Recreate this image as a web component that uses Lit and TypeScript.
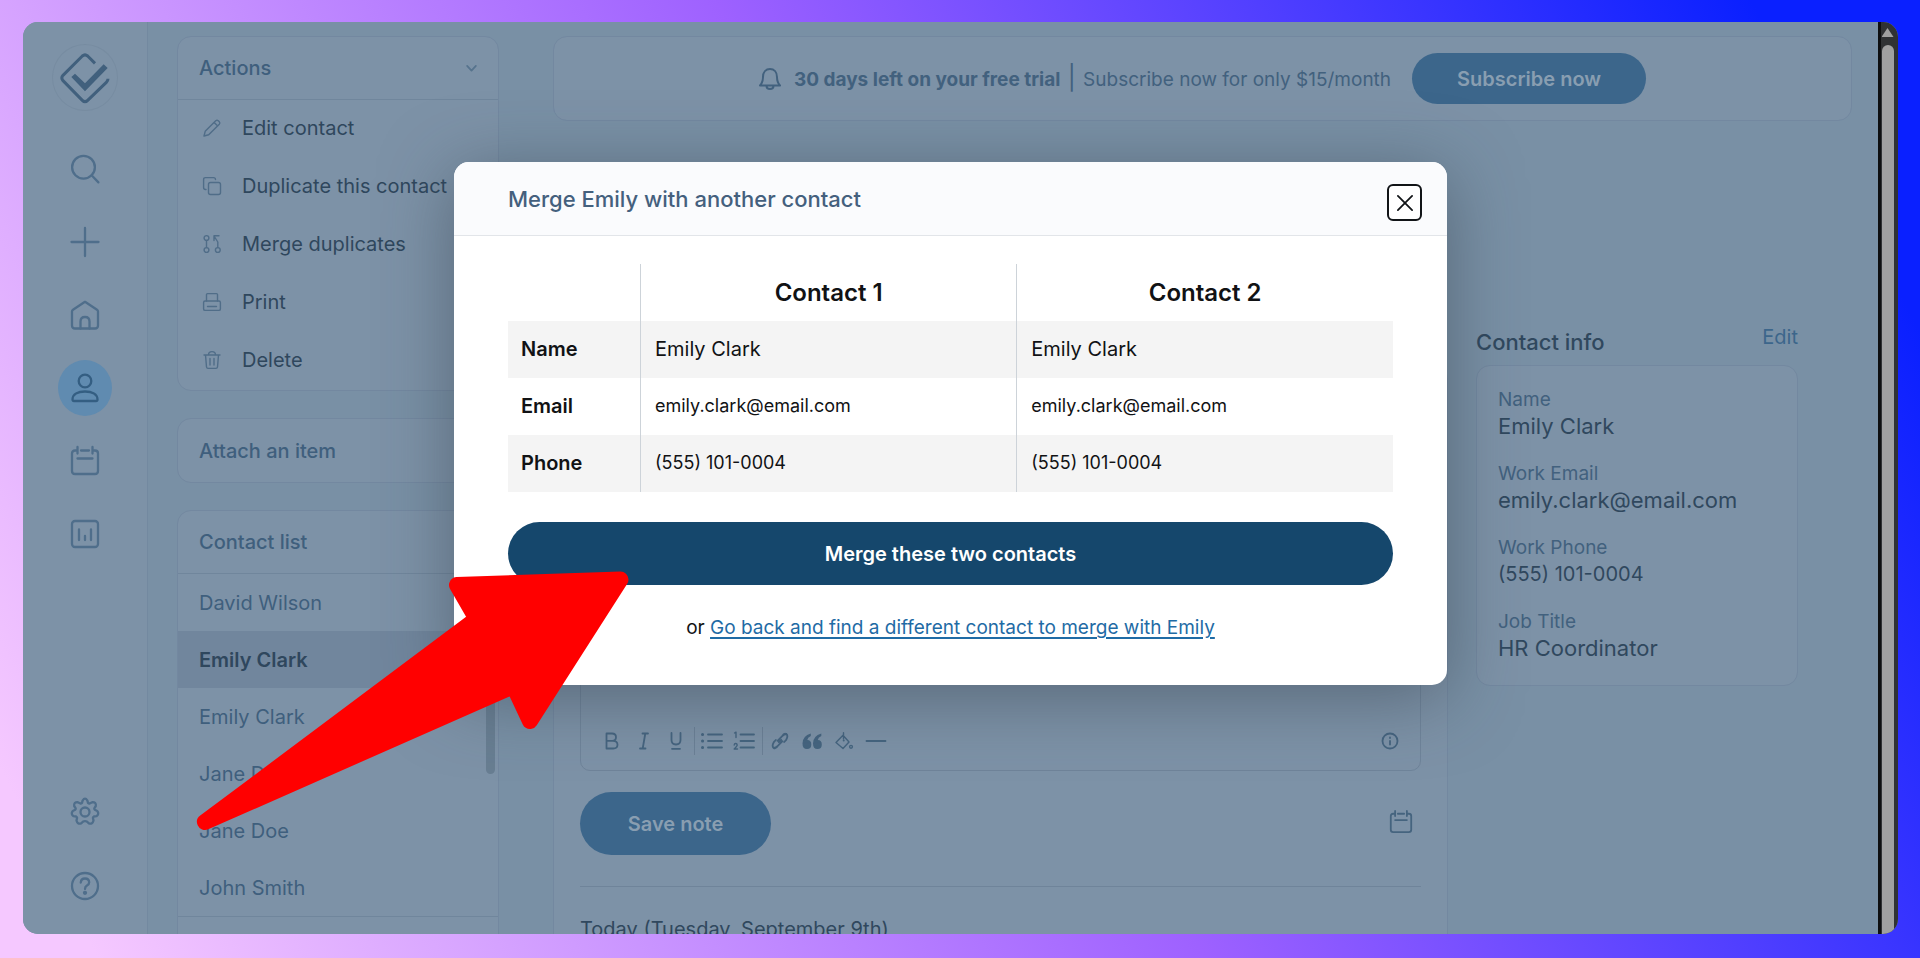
import { LitElement, html, css, svg, nothing } from "lit";
import { customElement, property, state } from "lit/decorators.js";
import { classMap } from "lit/directives/class-map.js";

const icons: Record<string, { box: string; art: unknown }> = {
  search: {
    box: "0 0 28 28",
    art: svg`<circle cx="12.5" cy="12.2" r="11.4"/><path d="M20.6 20.3 27.4 27.4"/>`,
  },
  plus: { box: "0 0 28 28", art: svg`<path d="M14 0V28M0.5 14H27.5"/>` },
  home: {
    box: "0 0 28 28",
    art: svg`<path d="M1 10.5V24.5Q1 27.5 4 27.5H24Q27 27.5 27 24.5V10.5Q27 9.500 26 8.800L14 0.800L2 8.800Q1 9.500 1 10.500Z"/><path d="M9.500 27.500V20.500Q9.500 16 14 16T18.500 20.500V27.500"/>`,
  },
  user: {
    box: "0 0 28 28",
    art: svg`<circle cx="14" cy="7" r="6.3"/><path d="M1.500 25.500C1.500 20 7 17.500 14 17.500S26.500 20 26.500 25.500Q26.500 27 25 27H3Q1.500 27 1.500 25.500Z"/>`,
  },
  calendar: {
    box: "0 0 28 28",
    art: svg`<path d="M6.500 3.500H4Q1 3.500 1 6.500V24Q1 27 4 27H24Q27 27 27 24V6.500Q27 3.500 24 3.500H21.500M10 3.500H18M6.500 0V6.500M21.500 0V6.500M6.500 11.500H21.500"/>`,
  },
  report: {
    box: "0 0 28 28",
    art: svg`<rect x="1" y="1" width="26" height="26" rx="3"/><path d="M8 9.500V20M14 16V20M20 9.500V20"/>`,
  },
  gear: {
    box: "0 0 28 28",
    art: svg`<circle cx="14" cy="14" r="4.500"/><path d="M11.6 2.600Q14-1.200 16.400 2.600L17 5Q17.600 5.600 18.600 5.500L21.200 4.200Q25.400 4 24.800 8L23.300 10.300Q23.200 11.200 23.800 11.800L26.200 13Q28.600 16 25.400 18.200L22.900 18.500Q22 19 21.900 19.800L22.500 22.600Q21.600 26.400 17.900 25.300L15.900 23.600Q14 22.600 12.100 23.600L10.100 25.300Q6.400 26.400 5.500 22.600L6.100 19.800Q6 19 5.100 18.500L2.600 18.200Q-0.600 16 1.800 13L4.200 11.800Q4.800 11.200 4.700 10.300L3.200 8Q2.600 4 6.800 4.200L9.400 5.500Q10.400 5.600 11 5Z"/>`,
  },
  help: {
    box: "0 0 28 28",
    art: svg`<circle cx="14" cy="14" r="13"/><path d="M9.800 10.500Q10 6.500 14 6.500T18.200 10.300Q18.200 12.300 16 13.600Q14 14.800 14 17"/><circle cx="14" cy="20.800" r="1" fill="currentColor"/>`,
  },
  pencil: {
    box: "0 0 18 18",
    art: svg`<path d="M1 17 2.200 12.300 12.700 1.800Q14 0.600 15.300 1.800L16.300 2.800Q17.400 4 16.300 5.200L5.700 15.800ZM11.200 3.400 14.700 6.900"/>`,
  },
  copy: {
    box: "0 0 18 18",
    art: svg`<rect x="5.500" y="5.500" width="12" height="12" rx="2"/><path d="M3 12.500H2.500Q.6 12.500.6 10.500V2.500Q.6.600 2.500.600H10.500Q12.500.600 12.500 2.500"/>`,
  },
  merge: {
    box: "0 0 18 18",
    art: svg`<circle cx="3.500" cy="3" r="2.400"/><circle cx="3.500" cy="15" r="2.400"/><circle cx="14.800" cy="15" r="2.400"/><path d="M3.500 5.400V12.600M14.800 12.600V7L11 1M11 5.500V.800H16"/>`,
  },
  print: {
    box: "0 0 18 18",
    art: svg`<path d="M3.500 8V1.500Q3.500.600 4.500.600H13.500Q14.500.600 14.500 1.500V8"/><rect x=".6" y="8" width="16.800" height="9.400" rx="1.500"/><path d="M4.500 13.500H13.500"/>`,
  },
  trash: {
    box: "0 0 18 18",
    art: svg`<path d="M1 4H17M5.500 4Q5.500.600 9 .600T12.500 4M2.500 4 3.500 16Q3.700 17.400 5 17.400H13Q14.300 17.400 14.500 16L15.500 4M7 7.500V14M11 7.500V14"/>`,
  },
  chevron: { box: "0 0 12 8", art: svg`<path d="M1 1 6 6.500 11 1"/>` },
  bell: {
    box: "0 0 22 22",
    art: svg`<path d="M1 17.500C3.500 15 4 12.500 4 9C4 4 7 1 11 1S18 4 18 9C18 12.500 18.500 15 21 17.500ZM7.500 18C7.500 22 14.500 22 14.500 18"/>`,
  },
  close: { box: "0 0 18 18", art: svg`<path d="M1 1 17 17M17 1 1 17"/>` },
  bold: {
    box: "0 0 18 18",
    art: svg`<path d="M3.500 1.500H9Q13 1.500 13 5.200T9 8.800H3.500ZM3.500 8.800H10Q14.500 8.800 14.500 12.700T10 16.500H3.500Z"/>`,
  },
  italic: { box: "0 0 18 18", art: svg`<path d="M7.500 1.500H13M5 16.500H10.500M10.300 1.500 7.700 16.500"/>` },
  underline: {
    box: "0 0 18 18",
    art: svg`<path d="M4.500 1V8Q4.500 12.500 9 12.500T13.500 8V1M5 16.800H13"/>`,
  },
  bullets: {
    box: "0 0 20 18",
    art: svg`<path d="M6 2.500H20M6 9H20M6 15.500H20"/><path d="M.5 2.500H.6M.5 9H.6M.5 15.500H.6" stroke-width="3"/>`,
  },
  numbers: {
    box: "0 0 20 18",
    art: svg`<path d="M6.500 2.500H20M6.500 9H20M6.500 15.500H20"/><path stroke-width="1.400" d="M.500 1 2 .200V5.500M.200 13Q.300 11.500 1.700 11.500T3.200 13Q3.200 14 .200 17H3.500"/>`,
  },
  link: {
    box: "0 0 18 18",
    art: svg`<path d="M6.500 8.800 11.200 4.100Q13 2.300 15.300 2Q17.500 3.800 15.200 7.800L13.200 10M11.500 9.200 6.800 13.900Q5 15.700 2.700 16Q.500 14.200 2.800 10.200L4.800 8M7.800 10.200 10.200 7.800M11.200 4.100Q13 .8 15.500 2.100M6.800 13.900Q5 17.200 2.500 15.900"/>`,
  },
  quote: {
    box: "0 0 20 18",
    art: svg`<path stroke="none" fill="currentColor" d="M8.800 1.500V4Q5.500 5.500 5.300 8Q9.300 8 9.300 12.500Q9.300 17 5 17Q.500 17 .500 11.500Q.500 4 8.800 1.500ZM19.300 1.500V4Q16 5.500 15.800 8Q19.800 8 19.800 12.500Q19.800 17 15.500 17Q11 17 11 11.500Q11 4 19.300 1.500Z"/>`,
  },
  fill: {
    box: "0 0 18 18",
    art: svg`<path stroke-width="1.400" d="M8 3.200 14 10 8 16.500 1 10.500ZM8.500 .800V7"/><circle cx="16" cy="14.800" r="1.400" stroke-width="1.400"/><circle cx="8.700" cy="8.500" r="1" fill="currentColor" stroke="none"/>`,
  },
  rule: { box: "0 0 20 18", art: svg`<path d="M.5 9H19.500"/>` },
  info: {
    box: "0 0 18 18",
    art: svg`<circle cx="9" cy="9" r="7.500"/><path d="M9 9V12.500M9 5.500V6"/>`,
  },
};

@customElement("line-icon")
export class LineIcon extends LitElement {
  @property() name = "";

  static styles = css`
    :host {
      display: inline-flex;
    }
    .art {
      width: 100%;
      height: 100%;
      overflow: visible;
      fill: none;
      stroke: currentColor;
      stroke-width: var(--line, 2.3);
      stroke-linecap: round;
      stroke-linejoin: round;
    }
  `;

  render() {
    const icon = icons[this.name];
    return icon
      ? html`<svg class="art" viewBox=${icon.box} aria-hidden="true">${icon.art}</svg>`
      : nothing;
  }
}

@customElement("nav-rail")
export class NavRail extends LitElement {
  static styles = css`
    :host {
      display: flex;
      flex-direction: column;
      align-items: center;
      width: 125px;
      flex: none;
      box-sizing: border-box;
      padding: 22px 0;
      border-right: 1px solid #7389a0;
      background: #7d92a7;
      color: #4f6e8b;
    }
    .brand {
      display: flex;
      align-items: center;
      justify-content: center;
      box-sizing: border-box;
      width: 66px;
      height: 67px;
      border: 1px solid #778ca1;
      border-radius: 50%;
      color: #41607d;
    }
    .mark {
      width: 50px;
      height: 52px;
    }
    .links {
      display: flex;
      flex-direction: column;
    }
    .main {
      margin-top: 30px;
      gap: 17px;
    }
    .foot {
      margin-top: auto;
      margin-bottom: -2px;
      gap: 18px;
    }
    .item {
      display: flex;
      align-items: center;
      justify-content: center;
      width: 54px;
      height: 56px;
      border-radius: 50%;
      color: inherit;
    }
    .item.on {
      background: #608bb0;
      color: #345e82;
    }
    .pic {
      width: 28px;
      height: 28px;
    }
  `;

  private item(name: string, label: string, on = false) {
    return html`<a href="#${name}" aria-label=${label} class=${classMap({ item: true, on })}
      ><line-icon class="pic" name=${name}></line-icon
    ></a>`;
  }

  render() {
    return html`
      <a class="brand" href="#start" aria-label="Start">
        <svg class="mark" viewBox="0 0 150 156" fill="none" stroke="currentColor">
          <path
            d="M105 34 83 12Q75 5 67 12L9 70Q2 78 9 86L67 145Q75 153 83 145L139 91Q144 86 144 80"
            stroke-width="9"
          />
          <path d="M34 75 45 65 75 94 131 37 143 48 75 118Z" fill="currentColor" stroke="none" />
        </svg>
      </a>
      <nav class="links main">
        ${this.item("search", "Search")} ${this.item("plus", "Add")} ${this.item("home", "Home")}
        ${this.item("user", "Contacts", true)} ${this.item("calendar", "Calendar")}
        ${this.item("report", "Reports")}
      </nav>
      <nav class="links foot">
        ${this.item("gear", "Settings")} ${this.item("help", "Help")}
      </nav>
    `;
  }
}

@customElement("side-panels")
export class SidePanels extends LitElement {
  @state() private selected = 1;

  private actions = [
    ["pencil", "Edit contact"],
    ["copy", "Duplicate this contact"],
    ["merge", "Merge duplicates"],
    ["print", "Print"],
    ["trash", "Delete"],
  ];
  private contacts = ["David Wilson", "Emily Clark", "Emily Clark", "Jane Doe", "Jane Doe", "John Smith"];

  static styles = css`
    :host {
      display: flex;
      flex-direction: column;
      gap: 27px;
      width: 322px;
      flex: none;
      color: #3f5f7d;
    }
    .card {
      box-sizing: border-box;
      border: 1px solid #7388a0;
      border-radius: 14px;
      background: #7d92a7;
      overflow: hidden;
      flex: none;
      position: relative;
    }
    .head {
      display: flex;
      align-items: center;
      justify-content: space-between;
      width: 100%;
      height: 63px;
      box-sizing: border-box;
      margin: 0;
      padding: 0 21px;
      border: 0;
      background: none;
      font: inherit;
      font-size: 20px;
      font-weight: 500;
      color: inherit;
    }
    .ruled {
      border-bottom: 1px solid #70869c;
    }
    .chev {
      width: 11px;
      height: 7px;
      color: #56738d;
      --line: 2;
    }
    .menu {
      list-style: none;
      margin: 0;
      padding: 0;
    }
    .act {
      display: flex;
      align-items: center;
      gap: 21px;
      width: 100%;
      height: 58px;
      padding: 0 25px 2px;
      border: 0;
      background: none;
      font: inherit;
      font-size: 20px;
      color: #2f475d;
    }
    .pic {
      width: 18px;
      height: 18px;
      flex: none;
      color: #506d88;
      --line: 1.4;
    }
    .name {
      display: flex;
      align-items: center;
      height: 57px;
      padding: 0 21px;
      font-size: 20px;
      color: #3f5f7d;
      text-decoration: none;
    }
    .name.on {
      background: #71869d;
      color: #2f475d;
      font-weight: 600;
    }
    .more {
      height: 80px;
      border-top: 1px solid #70869c;
    }
    .thumb {
      position: absolute;
      right: 3px;
      top: 64px;
      width: 9px;
      height: 199px;
      border-radius: 5px;
      background: #687e92;
    }
  `;

  render() {
    return html`
      <section class="card">
        <button class="head ruled">
          Actions <line-icon class="chev" name="chevron"></line-icon>
        </button>
        <ul class="menu">
          ${this.actions.map(
            ([icon, label]) => html`<li>
              <button class="act"><line-icon class="pic" name=${icon}></line-icon>${label}</button>
            </li>`
          )}
        </ul>
      </section>
      <section class="card"><button class="head">Attach an item</button></section>
      <section class="card">
        <h2 class="head ruled">Contact list</h2>
        <ul class="menu">
          ${this.contacts.map(
            (name, i) => html`<li>
              <a
                href="#contact-${i}"
                class=${classMap({ name: true, on: i === this.selected })}
                @click=${() => (this.selected = i)}
                >${name}</a
              >
            </li>`
          )}
        </ul>
        <div class="more"></div>
        <div class="thumb"></div>
      </section>
    `;
  }
}

@customElement("contact-page")
export class ContactPage extends LitElement {
  private details = [
    ["Name", "Emily Clark"],
    ["Work Email", "emily.clark@email.com"],
    ["Work Phone", "(555) 101-0004"],
    ["Job Title", "HR Coordinator"],
  ];
  private tools = [
    [["bold", "Bold"], ["italic", "Italic"], ["underline", "Underline"]],
    [["bullets", "Bulleted list"], ["numbers", "Numbered list"]],
    [["link", "Link"], ["quote", "Quote"], ["fill", "Highlight"], ["rule", "Divider"]],
  ];

  static styles = css`
    :host {
      display: flex;
      flex-direction: column;
      flex: 1;
      min-width: 0;
      color: #30485e;
    }
    .card {
      box-sizing: border-box;
      border: 1px solid #7388a0;
      border-radius: 14px;
      background: #7d92a7;
    }
    .trial {
      display: flex;
      align-items: center;
      justify-content: center;
      height: 85px;
      color: #42617e;
      font-size: 19px;
      flex: none;
    }
    .bell {
      width: 22px;
      height: 22px;
      margin-right: 13px;
      --line: 2;
    }
    .trial .text {
      margin: 0;
    }
    .bar {
      margin: 0 2px;
      font-size: 24px;
      line-height: 24px;
    }
    .button {
      border: 0;
      border-radius: 32px;
      background: #3c668b;
      color: #899eb1;
      font: inherit;
      font-size: 20px;
      font-weight: 600;
    }
    .subscribe {
      height: 51px;
      width: 234px;
      margin-left: 21px;
    }
    .cols {
      display: flex;
      gap: 28px;
      padding-right: 54px;
      margin-top: 200px;
      align-items: flex-start;
    }
    .notes {
      flex: 1;
      min-width: 0;
      margin-top: 44px;
      padding: 26px;
      border-radius: 14px 14px 0 0;
      height: 760px;
    }
    .editor {
      border: 1px solid #6f849a;
      border-radius: 10px;
      box-sizing: border-box;
      height: 379px;
      display: flex;
      flex-direction: column;
    }
    .field {
      flex: 1;
      border: 0;
      background: none;
      resize: none;
      font: inherit;
    }
    .toolbar {
      display: flex;
      align-items: center;
      height: 58px;
      padding: 0 20px 0 15px;
      color: #45647f;
    }
    .group {
      display: flex;
      gap: 1px;
      padding-right: 3px;
    }
    .group + .group {
      border-left: 1px solid #6b8096;
      padding-left: 1px;
    }
    .tool {
      display: flex;
      align-items: center;
      justify-content: center;
      width: 31px;
      height: 28px;
      padding: 0;
      border: 0;
      background: none;
      color: inherit;
      --line: 1.8;
    }
    .tool.end {
      margin-left: auto;
      width: 20px;
    }
    .glyph {
      width: 20px;
      height: 18px;
    }
    .saverow {
      display: flex;
      align-items: center;
      justify-content: space-between;
      margin-top: 21px;
      padding-right: 9px;
    }
    .save {
      width: 191px;
      height: 63px;
    }
    .cal {
      width: 22px;
      height: 22px;
      color: #45647f;
    }
    .date {
      display: flex;
      padding: 0;
      width: 22px;
      height: 26px;
      border: 0;
      background: none;
    }
    .day {
      margin: 31px 0 0;
      padding-top: 28px;
      border-top: 1px solid #6f849a;
      font-size: 20px;
      line-height: 28px;
      font-weight: 400;
    }
    .info {
      width: 322px;
      flex: none;
    }
    .top {
      display: flex;
      justify-content: space-between;
      height: 44px;
    }
    .title {
      margin: 0;
      padding-top: 7px;
      font-size: 22px;
      line-height: 28px;
      font-weight: 500;
    }
    .edit {
      font-size: 20px;
      line-height: 33px;
      color: #3c668b;
      text-decoration: none;
    }
    .facts {
      margin: 0;
      padding: 20px 21px 23px;
      display: grid;
      gap: 20px;
      height: 321px;
      align-content: start;
    }
    .key {
      font-size: 19px;
      line-height: 27px;
      color: #42617e;
    }
    .val {
      margin: 0;
      font-size: 22px;
      line-height: 27px;
    }
    .val.phone {
      font-size: 20px;
    }
  `;

  render() {
    return html`
      <section class="card trial">
        <line-icon class="bell" name="bell"></line-icon>
        <p class="text">
          <b>30 days left on your free trial</b> <span class="bar">|</span> Subscribe now for only
          $15/month
        </p>
        <button class="button subscribe">Subscribe now</button>
      </section>
      <div class="cols">
        <section class="card notes">
          <div class="editor">
            <textarea class="field" aria-label="Note"></textarea>
            <div class="toolbar">
              ${this.tools.map(
                (group) => html`<div class="group">
                  ${group.map(
                    ([icon, label]) => html`<button class="tool" aria-label=${label}>
                      <line-icon class="glyph" name=${icon}></line-icon>
                    </button>`
                  )}
                </div>`
              )}
              <button class="tool end" aria-label="Formatting help">
                <line-icon class="glyph" name="info"></line-icon>
              </button>
            </div>
          </div>
          <div class="saverow">
            <button class="button save">Save note</button>
            <button class="date" aria-label="Pick a date">
              <line-icon class="cal" name="calendar"></line-icon>
            </button>
          </div>
          <h2 class="day">Today (Tuesday, September 9th)</h2>
        </section>
        <aside class="info">
          <div class="top">
            <h2 class="title">Contact info</h2>
            <a class="edit" href="#edit">Edit</a>
          </div>
          <dl class="card facts">
            ${this.details.map(
              ([key, value]) => html`<div>
                <dt class="key">${key}</dt>
                <dd class=${classMap({ val: true, phone: key === "Work Phone" })}>${value}</dd>
              </div>`
            )}
          </dl>
        </aside>
      </div>
    `;
  }
}

@customElement("merge-dialog")
export class MergeDialog extends LitElement {
  private rows = [
    ["Name", "Emily Clark", "Emily Clark"],
    ["Email", "emily.clark@email.com", "emily.clark@email.com"],
    ["Phone", "(555) 101-0004", "(555) 101-0004"],
  ];

  static styles = css`
    :host {
      display: block;
      width: 993px;
      max-width: 90%;
      border-radius: 15px;
      background: #fff;
      color: #111214;
      overflow: hidden;
      box-shadow: 0 12px 70px rgba(50, 62, 74, 0.5);
    }
    .head {
      display: flex;
      justify-content: space-between;
      align-items: flex-start;
      height: 74px;
      box-sizing: border-box;
      padding: 22px 25px 0 54px;
      background: #fafbfd;
      border-bottom: 1px solid #e2e5e9;
    }
    .title {
      margin: 0;
      font-size: 22px;
      line-height: 30px;
      font-weight: 500;
      color: #44607d;
    }
    .close {
      display: flex;
      align-items: center;
      justify-content: center;
      width: 35px;
      height: 37px;
      padding: 0;
      border: 2px solid #111417;
      border-radius: 6px;
      background: #fff;
      color: #111417;
    }
    .x {
      width: 16px;
      height: 16px;
      --line: 2;
    }
    .body {
      padding: 28px 54px 42px;
    }
    .data {
      width: 100%;
      border-collapse: collapse;
      table-layout: fixed;
      font-size: 20px;
    }
    .data tr {
      height: 57px;
    }
    .data th,
    .data td {
      padding: 0 14px 2px;
      text-align: left;
    }
    .data th {
      padding: 0 13px 2px;
      font-weight: 600;
    }
    .data .fine td {
      font-size: 18px;
    }
    .data .lead {
      width: 106px;
    }
    .data thead th {
      padding-bottom: 0;
      text-align: center;
      font-size: 24px;
    }
    .data tr > * + * {
      border-left: 1px solid #cdd3d9;
    }
    .data tbody tr:nth-child(odd) {
      background: #f4f4f4;
    }
    .merge {
      display: block;
      width: 100%;
      height: 63px;
      margin-top: 30px;
      border: 0;
      border-radius: 32px;
      background: #15476c;
      color: #fff;
      font: inherit;
      font-size: 20px;
      font-weight: 600;
    }
    .alt {
      margin: 28px 0 0;
      text-align: center;
      font-size: 19px;
      line-height: 30px;
    }
    .back {
      color: #1f6ba5;
      text-underline-offset: 3px;
      text-decoration-thickness: 2px;
    }
  `;

  render() {
    return html`
      <header class="head">
        <h1 class="title">Merge Emily with another contact</h1>
        <button class="close" aria-label="Close">
          <line-icon class="x" name="close"></line-icon>
        </button>
      </header>
      <div class="body">
        <table class="data">
          <thead>
            <tr>
              <th class="lead"></th>
              <th scope="col">Contact 1</th>
              <th scope="col">Contact 2</th>
            </tr>
          </thead>
          <tbody>
            ${this.rows.map(
              ([label, a, b]) => html`<tr class=${classMap({ fine: label !== "Name" })}>
                <th scope="row">${label}</th>
                <td>${a}</td>
                <td>${b}</td>
              </tr>`
            )}
          </tbody>
        </table>
        <button class="merge">Merge these two contacts</button>
        <p class="alt">
          or <a class="back" href="#back">Go back and find a different contact to merge with Emily</a>
        </p>
      </div>
    `;
  }
}

@customElement("app-root")
export class AppRoot extends LitElement {
  static styles = css`
    :host {
      display: block;
      box-sizing: border-box;
      height: 100vh;
      padding: 22px 22px 24px 23px;
      position: relative;
      overflow: hidden;
      font-family: Inter, "Liberation Sans", sans-serif;
      background: linear-gradient(63deg, #f5c8ff 4%, #9e61ff 50%, #0a20ff 93%);
    }
    .window {
      display: flex;
      height: 100%;
      border-radius: 15px;
      overflow: hidden;
      background: #7990a5;
    }
    .view {
      flex: 1;
      min-width: 0;
      position: relative;
      overflow: hidden;
      display: flex;
    }
    .page {
      flex: 1;
      min-width: 0;
      display: flex;
      gap: 54px;
      padding: 14px 26px 0 29px;
    }
    .layer {
      position: absolute;
      inset: 0;
      display: flex;
      justify-content: center;
      align-items: flex-start;
      padding-top: 140px;
    }
    .scroll {
      display: flex;
      flex-direction: column;
      align-items: center;
      gap: 8px;
      width: 20px;
      flex: none;
      box-sizing: border-box;
      border-left: 3px solid #0e0f10;
      padding: 6px 4px 0 0;
      background: #303234;
    }
    .up {
      width: 12px;
      height: 9px;
      background: #a0a0a0;
      clip-path: polygon(50% 0, 100% 100%, 0 100%);
    }
    .grip {
      flex: 1;
      width: 12px;
      border-radius: 6px 6px 0 0;
      background: #a0a0a0;
    }
    .arrow {
      position: absolute;
      left: 197px;
      top: 571px;
      width: 432px;
      height: 160px;
      overflow: visible;
      pointer-events: none;
      fill: #f00;
      stroke: #f00;
      stroke-width: 16;
      stroke-linejoin: round;
    }
  `;

  render() {
    return html`
      <div class="window">
        <div class="view">
          <nav-rail></nav-rail>
          <div class="page">
            <side-panels></side-panels>
            <contact-page></contact-page>
          </div>
          <div class="layer">
            <merge-dialog role="dialog" aria-label="Merge contacts"></merge-dialog>
          </div>
        </div>
        <div class="scroll">
          <div class="up"></div>
          <div class="grip"></div>
        </div>
      </div>
      <svg class="arrow" viewBox="197 571 432 160" aria-hidden="true">
        <path d="M205 822 476.600 619 457 585 620.500 579.500 530 721 513.500 686Z" />
      </svg>
    `;
  }
}
